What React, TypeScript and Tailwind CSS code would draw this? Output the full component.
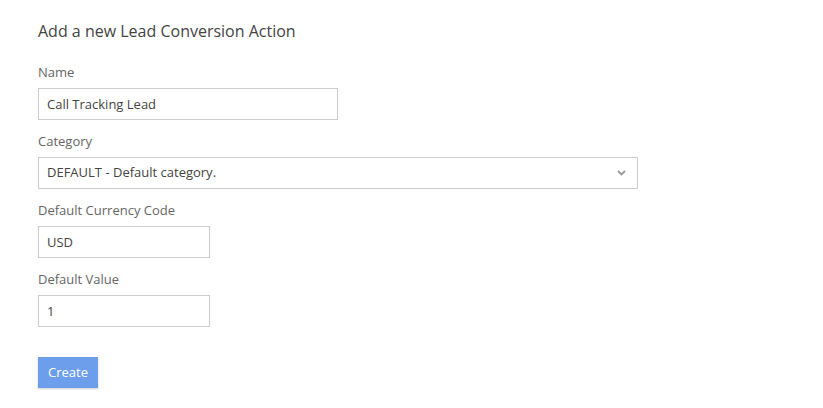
import { useState } from 'react'

function Field({ label, children }: { label: string; children: React.ReactNode }) {
  return (
    <div className="mb-[12px] flex flex-col gap-[7px]">
      <label className="text-[13px] leading-[18px] text-[#666]">{label}</label>
      {children}
    </div>
  )
}

export default function App() {
  const [name, setName] = useState('Call Tracking Lead')
  const [currency, setCurrency] = useState('USD')
  const [value, setValue] = useState('1')

  const inputCls =
    'block h-8 px-[8px] border border-[#ccc] bg-white text-[13px] text-[#444] outline-none'

  return (
    <div className="min-h-screen bg-white pl-[38px] pt-[20px] font-['Open_Sans','Liberation_Sans',sans-serif]">
      <h2 className="text-[16px] leading-[22px] text-[#444] mb-[21px]">Add a new Lead Conversion Action</h2>

      <Field label="Name">
        <input className={`${inputCls} w-[300px]`} value={name} onChange={e => setName(e.target.value)} />
      </Field>

      <Field label="Category">
        <div className="relative w-[600px]">
          <select className={`${inputCls} w-full appearance-none pr-8`} defaultValue="DEFAULT">
            <option value="DEFAULT">DEFAULT - Default category.</option>
          </select>
          <svg className="absolute right-[12px] top-[13px] pointer-events-none" width="9" height="6" viewBox="0 0 9 6">
            <path d="M1 1l3.5 3.5L8 1" fill="none" stroke="#999" strokeWidth="1.8" />
          </svg>
        </div>
      </Field>

      <Field label="Default Currency Code">
        <input className={`${inputCls} w-[172px]`} value={currency} onChange={e => setCurrency(e.target.value)} />
      </Field>

      <Field label="Default Value">
        <input className={`${inputCls} w-[172px]`} value={value} onChange={e => setValue(e.target.value)} />
      </Field>

      <button className="mt-[18px] h-[31px] w-[60px] bg-[#6d9eeb] text-white text-[13px] shadow-[0_1px_2px_rgba(0,0,0,0.2)]">
        Create
      </button>
    </div>
  )
}
